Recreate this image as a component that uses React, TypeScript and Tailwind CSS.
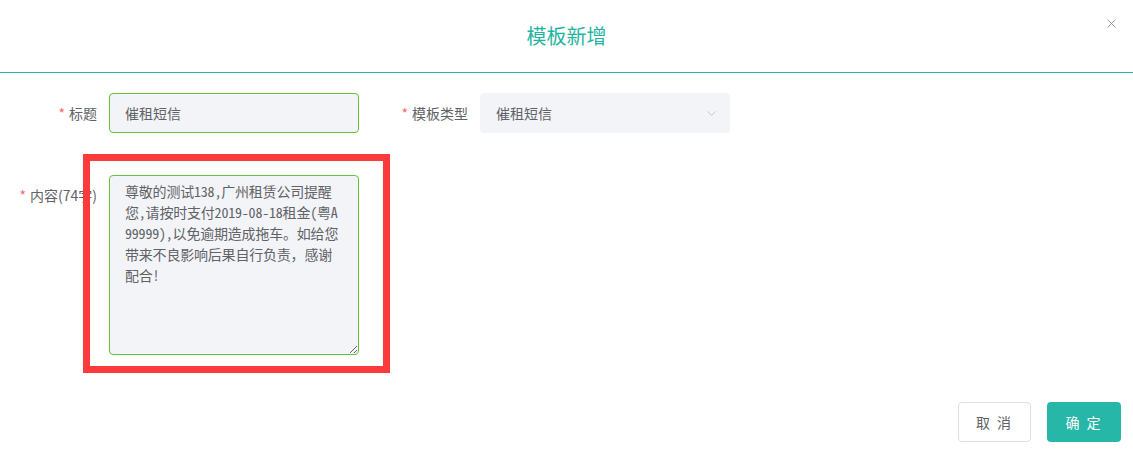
import React from "react";
import { ChevronDown, X } from "lucide-react";

const content =
  "尊敬的测试138,广州租赁公司提醒\n您,请按时支付2019-08-18租金(粤A\n99999),以免逾期造成拖车。如给您\n带来不良影响后果自行负责，感谢\n配合!";

export default function App() {
  const font = { fontFamily: '"Noto Sans CJK SC", "Noto Sans", sans-serif' };
  return (
    <div
      className="relative flex h-[456px] w-full flex-col bg-white text-[14px] text-[#606266]"
      style={font}
    >
      <div className="relative flex h-[73px] items-center justify-center border-b border-[#26b6a5]">
        <span className="text-[20px] leading-none text-[#1fb4a2]">模板新增</span>
        <button className="absolute right-[14px] top-[16px] text-[#909399]">
          <X size={15} strokeWidth={1.5} />
        </button>
      </div>

      <div className="flex flex-col pt-[20px]">
        <div className="flex items-center">
          <label className="w-[109px] pr-3 text-right leading-10">
            <span className="mr-1 text-[#f56c6c]">*</span>标题
          </label>
          <input
            className="h-10 w-[250px] rounded-[4px] border border-[#67c23a] bg-[#f3f4f8] px-[15px] text-[14px] text-[#606266] outline-none"
            defaultValue="催租短信"
            style={font}
          />
          <label className="ml-[21px] w-[100px] pr-3 text-right leading-10">
            <span className="mr-1 text-[#f56c6c]">*</span>模板类型
          </label>
          <div className="flex h-10 w-[250px] items-center justify-between rounded-[4px] bg-[#f3f4f8] pl-[16px] pr-[11px]">
            <span>催租短信</span>
            <ChevronDown size={15} strokeWidth={1.5} className="text-[#c0c4cc]" />
          </div>
        </div>

        <div className="mt-[42px] flex items-start">
          <label className="w-[109px] whitespace-nowrap pr-3 text-right leading-10">
            <span className="mr-1 text-[#f56c6c]">*</span>内容(74字)
          </label>
          <textarea
            wrap="off"
            className="h-[180px] w-[250px] overflow-hidden rounded-[4px] border border-[#67c23a] bg-[#f3f4f8] py-[5px] pl-[15px] pr-[2px] text-[14px] leading-[21px] tracking-[-0.2px] text-[#606266] outline-none"
            style={{
              fontFamily:
                '"Noto Sans Mono CJK SC", "Noto Sans CJK SC", monospace',
            }}
            defaultValue={content}
          />
        </div>
      </div>

      <div className="absolute left-[83px] top-[154px] h-[219px] w-[307px] border-[7px] border-[#fb3b3b]" />

      <div className="mt-auto flex justify-end gap-4 pb-[14px] pr-3">
        <button className="h-10 w-[73px] rounded-[4px] border border-[#dcdfe6] bg-white text-[14px] tracking-[2px] text-[#606266]">
          取 消
        </button>
        <button className="h-10 w-[74px] rounded-[4px] bg-[#27b7a8] text-[14px] tracking-[2px] text-white">
          确 定
        </button>
      </div>
    </div>
  );
}
